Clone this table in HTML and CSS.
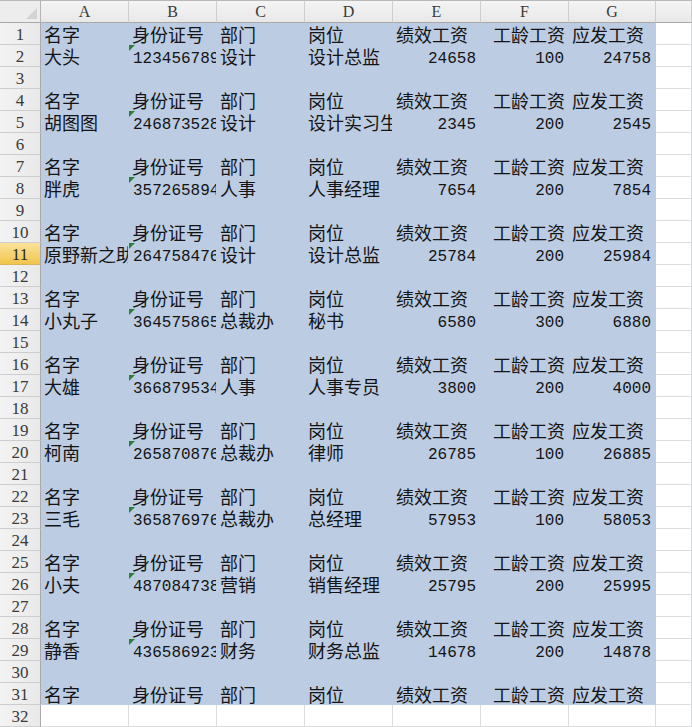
FILE: index.html
```html
<!DOCTYPE html>
<html lang="zh-CN">
<head>
<meta charset="utf-8">
<title>工资表</title>
<link rel="stylesheet" href="styles.css">
</head>
<body>
<div class="sheet">
  <div class="corner"></div><div class="ch">A</div><div class="ch">B</div><div class="ch">C</div><div class="ch">D</div><div class="ch">E</div><div class="ch">F</div><div class="ch">G</div><div class="ch"></div>

  <div class="rh">1</div><div class="cell sel">名字</div><div class="cell sel">身份证号</div><div class="cell sel">部门</div><div class="cell sel">岗位</div><div class="cell sel">绩效工资</div><div class="cell sel r">工龄工资</div><div class="cell sel">应发工资</div><div class="cell"></div>
  <div class="rh">2</div><div class="cell sel">大头</div><div class="cell sel mono id">123456789</div><div class="cell sel">设计</div><div class="cell sel">设计总监</div><div class="cell sel mono num">24658</div><div class="cell sel mono num">100</div><div class="cell sel mono num">24758</div><div class="cell"></div>
  <div class="rh">3</div><div class="cell sel"></div><div class="cell sel"></div><div class="cell sel"></div><div class="cell sel"></div><div class="cell sel"></div><div class="cell sel"></div><div class="cell sel"></div><div class="cell"></div>

  <div class="rh">4</div><div class="cell sel">名字</div><div class="cell sel">身份证号</div><div class="cell sel">部门</div><div class="cell sel">岗位</div><div class="cell sel">绩效工资</div><div class="cell sel r">工龄工资</div><div class="cell sel">应发工资</div><div class="cell"></div>
  <div class="rh">5</div><div class="cell sel">胡图图</div><div class="cell sel mono id">246873528</div><div class="cell sel">设计</div><div class="cell sel">设计实习生</div><div class="cell sel mono num">2345</div><div class="cell sel mono num">200</div><div class="cell sel mono num">2545</div><div class="cell"></div>
  <div class="rh">6</div><div class="cell sel"></div><div class="cell sel"></div><div class="cell sel"></div><div class="cell sel"></div><div class="cell sel"></div><div class="cell sel"></div><div class="cell sel"></div><div class="cell"></div>

  <div class="rh">7</div><div class="cell sel">名字</div><div class="cell sel">身份证号</div><div class="cell sel">部门</div><div class="cell sel">岗位</div><div class="cell sel">绩效工资</div><div class="cell sel r">工龄工资</div><div class="cell sel">应发工资</div><div class="cell"></div>
  <div class="rh">8</div><div class="cell sel">胖虎</div><div class="cell sel mono id">357265894</div><div class="cell sel">人事</div><div class="cell sel">人事经理</div><div class="cell sel mono num">7654</div><div class="cell sel mono num">200</div><div class="cell sel mono num">7854</div><div class="cell"></div>
  <div class="rh">9</div><div class="cell sel"></div><div class="cell sel"></div><div class="cell sel"></div><div class="cell sel"></div><div class="cell sel"></div><div class="cell sel"></div><div class="cell sel"></div><div class="cell"></div>

  <div class="rh">10</div><div class="cell sel">名字</div><div class="cell sel">身份证号</div><div class="cell sel">部门</div><div class="cell sel">岗位</div><div class="cell sel">绩效工资</div><div class="cell sel r">工龄工资</div><div class="cell sel">应发工资</div><div class="cell"></div>
  <div class="rh active">11</div><div class="cell sel">原野新之助</div><div class="cell sel mono id">264758476</div><div class="cell sel">设计</div><div class="cell sel">设计总监</div><div class="cell sel mono num">25784</div><div class="cell sel mono num">200</div><div class="cell sel mono num">25984</div><div class="cell"></div>
  <div class="rh">12</div><div class="cell sel"></div><div class="cell sel"></div><div class="cell sel"></div><div class="cell sel"></div><div class="cell sel"></div><div class="cell sel"></div><div class="cell sel"></div><div class="cell"></div>

  <div class="rh">13</div><div class="cell sel">名字</div><div class="cell sel">身份证号</div><div class="cell sel">部门</div><div class="cell sel">岗位</div><div class="cell sel">绩效工资</div><div class="cell sel r">工龄工资</div><div class="cell sel">应发工资</div><div class="cell"></div>
  <div class="rh">14</div><div class="cell sel">小丸子</div><div class="cell sel mono id">364575865</div><div class="cell sel">总裁办</div><div class="cell sel">秘书</div><div class="cell sel mono num">6580</div><div class="cell sel mono num">300</div><div class="cell sel mono num">6880</div><div class="cell"></div>
  <div class="rh">15</div><div class="cell sel"></div><div class="cell sel"></div><div class="cell sel"></div><div class="cell sel"></div><div class="cell sel"></div><div class="cell sel"></div><div class="cell sel"></div><div class="cell"></div>

  <div class="rh">16</div><div class="cell sel">名字</div><div class="cell sel">身份证号</div><div class="cell sel">部门</div><div class="cell sel">岗位</div><div class="cell sel">绩效工资</div><div class="cell sel r">工龄工资</div><div class="cell sel">应发工资</div><div class="cell"></div>
  <div class="rh">17</div><div class="cell sel">大雄</div><div class="cell sel mono id">366879534</div><div class="cell sel">人事</div><div class="cell sel">人事专员</div><div class="cell sel mono num">3800</div><div class="cell sel mono num">200</div><div class="cell sel mono num">4000</div><div class="cell"></div>
  <div class="rh">18</div><div class="cell sel"></div><div class="cell sel"></div><div class="cell sel"></div><div class="cell sel"></div><div class="cell sel"></div><div class="cell sel"></div><div class="cell sel"></div><div class="cell"></div>

  <div class="rh">19</div><div class="cell sel">名字</div><div class="cell sel">身份证号</div><div class="cell sel">部门</div><div class="cell sel">岗位</div><div class="cell sel">绩效工资</div><div class="cell sel r">工龄工资</div><div class="cell sel">应发工资</div><div class="cell"></div>
  <div class="rh">20</div><div class="cell sel">柯南</div><div class="cell sel mono id">265870876</div><div class="cell sel">总裁办</div><div class="cell sel">律师</div><div class="cell sel mono num">26785</div><div class="cell sel mono num">100</div><div class="cell sel mono num">26885</div><div class="cell"></div>
  <div class="rh">21</div><div class="cell sel"></div><div class="cell sel"></div><div class="cell sel"></div><div class="cell sel"></div><div class="cell sel"></div><div class="cell sel"></div><div class="cell sel"></div><div class="cell"></div>

  <div class="rh">22</div><div class="cell sel">名字</div><div class="cell sel">身份证号</div><div class="cell sel">部门</div><div class="cell sel">岗位</div><div class="cell sel">绩效工资</div><div class="cell sel r">工龄工资</div><div class="cell sel">应发工资</div><div class="cell"></div>
  <div class="rh">23</div><div class="cell sel">三毛</div><div class="cell sel mono id">365876976</div><div class="cell sel">总裁办</div><div class="cell sel">总经理</div><div class="cell sel mono num">57953</div><div class="cell sel mono num">100</div><div class="cell sel mono num">58053</div><div class="cell"></div>
  <div class="rh">24</div><div class="cell sel"></div><div class="cell sel"></div><div class="cell sel"></div><div class="cell sel"></div><div class="cell sel"></div><div class="cell sel"></div><div class="cell sel"></div><div class="cell"></div>

  <div class="rh">25</div><div class="cell sel">名字</div><div class="cell sel">身份证号</div><div class="cell sel">部门</div><div class="cell sel">岗位</div><div class="cell sel">绩效工资</div><div class="cell sel r">工龄工资</div><div class="cell sel">应发工资</div><div class="cell"></div>
  <div class="rh">26</div><div class="cell sel">小夫</div><div class="cell sel mono id">487084738</div><div class="cell sel">营销</div><div class="cell sel">销售经理</div><div class="cell sel mono num">25795</div><div class="cell sel mono num">200</div><div class="cell sel mono num">25995</div><div class="cell"></div>
  <div class="rh">27</div><div class="cell sel"></div><div class="cell sel"></div><div class="cell sel"></div><div class="cell sel"></div><div class="cell sel"></div><div class="cell sel"></div><div class="cell sel"></div><div class="cell"></div>

  <div class="rh">28</div><div class="cell sel">名字</div><div class="cell sel">身份证号</div><div class="cell sel">部门</div><div class="cell sel">岗位</div><div class="cell sel">绩效工资</div><div class="cell sel r">工龄工资</div><div class="cell sel">应发工资</div><div class="cell"></div>
  <div class="rh">29</div><div class="cell sel">静香</div><div class="cell sel mono id">436586923</div><div class="cell sel">财务</div><div class="cell sel">财务总监</div><div class="cell sel mono num">14678</div><div class="cell sel mono num">200</div><div class="cell sel mono num">14878</div><div class="cell"></div>
  <div class="rh">30</div><div class="cell sel"></div><div class="cell sel"></div><div class="cell sel"></div><div class="cell sel"></div><div class="cell sel"></div><div class="cell sel"></div><div class="cell sel"></div><div class="cell"></div>

  <div class="rh">31</div><div class="cell sel">名字</div><div class="cell sel">身份证号</div><div class="cell sel">部门</div><div class="cell sel">岗位</div><div class="cell sel">绩效工资</div><div class="cell sel r">工龄工资</div><div class="cell sel">应发工资</div><div class="cell"></div>
  <div class="rh">32</div><div class="cell"></div><div class="cell"></div><div class="cell"></div><div class="cell"></div><div class="cell"></div><div class="cell"></div><div class="cell"></div><div class="cell"></div>
</div>
</body>
</html>
```

FILE: styles.css
```css
html, body {
  margin: 0;
  padding: 0;
  background: #ffffff;
}

.sheet {
  display: grid;
  grid-template-columns: 41px repeat(6, 88px) 87px 36px;
  grid-template-rows: 23px;
  grid-auto-rows: 22px;
  width: 692px;
  height: 727px;
  overflow: hidden;
  font-family: "Noto Sans CJK SC", sans-serif;
}

.corner,
.ch,
.rh,
.cell {
  box-sizing: border-box;
  overflow: hidden;
  white-space: nowrap;
}

.corner {
  position: relative;
  background: #ededed;
  border-top: 1px solid #b8b8b8;
  border-right: 1px solid #b4b4b4;
  border-bottom: 1px solid #a9a9a9;
}

.corner::after {
  content: "";
  position: absolute;
  right: 3px;
  bottom: 3px;
  border-style: solid;
  border-width: 0 0 11px 11px;
  border-color: transparent transparent #d3d3d3 transparent;
}

.ch {
  background: linear-gradient(#f4f4f4, #e8e8e8);
  border-top: 1px solid #b8b8b8;
  border-right: 1px solid #cfcfcf;
  border-bottom: 1px solid #a9a9a9;
  font-family: "Liberation Serif", serif;
  font-size: 16px;
  line-height: 21px;
  color: #3a3a3a;
  text-align: center;
}

.rh {
  background: linear-gradient(90deg, #f3f3f3, #e9e9e9);
  border-right: 1px solid #a9a9a9;
  border-bottom: 1px solid #cdcdcd;
  padding-top: 3px;
  font-family: "Liberation Serif", serif;
  font-size: 17px;
  line-height: 18px;
  color: #3a3a3a;
  text-align: center;
}

.rh.active {
  background: linear-gradient(#fbe39c, #f2c54c);
  border-bottom-color: #d8b55a;
  color: #2a2a2a;
}

.cell {
  border-right: 1px solid #dadcdd;
  border-bottom: 1px solid #dadcdd;
  padding: 2px 3px 0;
  font-size: 18px;
  line-height: 19px;
  color: #141414;
}

.cell.sel {
  background: #bccce3;
  border-color: #bccce3;
}

.cell.r {
  text-align: right;
}

.cell.mono {
  font-family: "Liberation Mono", monospace;
  font-size: 16px;
  line-height: 14px;
  padding-top: 7px;
}

.cell.num {
  text-align: right;
  padding-right: 4px;
}

.cell.id {
  position: relative;
  padding-left: 4px;
}

.cell.id::before {
  content: "";
  position: absolute;
  left: 0;
  top: 0;
  border-style: solid;
  border-width: 6px 6px 0 0;
  border-color: #2a7d3a transparent transparent transparent;
}
```
